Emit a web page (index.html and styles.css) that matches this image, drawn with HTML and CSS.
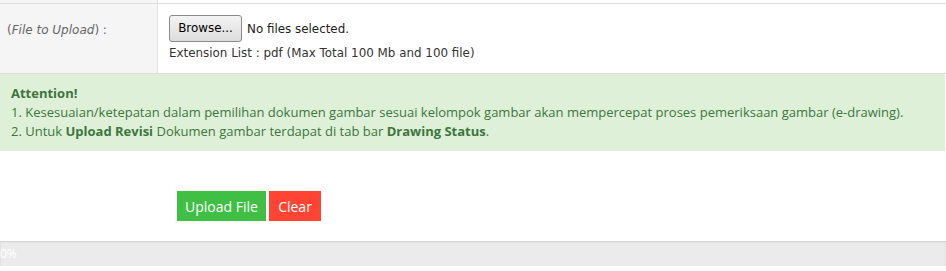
FILE: index.html
```html
<!DOCTYPE html>
<html lang="id">
<head>
    <meta charset="utf-8">
    <title>Upload Dokumen Gambar</title>
    <link rel="stylesheet" href="styles.css">
</head>
<body>
    <table class="form-table">
        <tr class="row-prev">
            <td class="label-cell"></td>
            <td class="value-cell"></td>
        </tr>
        <tr class="row-file">
            <td class="label-cell">(<i>File to Upload</i>) :</td>
            <td class="value-cell">
                <div class="file-line">
                    <span class="browse-btn">Browse...</span>
                    <span class="file-status">No files selected.</span>
                </div>
                <div class="ext-note">Extension List : pdf (Max Total 100 Mb and 100 file)</div>
            </td>
        </tr>
    </table>

    <div class="alert">
        <b>Attention!</b><br>
        1. Kesesuaian/ketepatan dalam pemilihan dokumen gambar sesuai kelompok gambar akan mempercepat proses pemeriksaan gambar (e-drawing).<br>
        2. Untuk <b>Upload Revisi</b> Dokumen gambar terdapat di tab bar <b>Drawing Status</b>.
    </div>

    <div class="actions">
        <button type="button" class="btn btn-upload">Upload File</button>
        <button type="button" class="btn btn-clear">Clear</button>
    </div>

    <div class="progress">
        <div class="progress-bar">0%</div>
    </div>
</body>
</html>
```

FILE: styles.css
```css
body {
    margin: 0;
    background: #fff;
    font-family: "DejaVu Sans", Verdana, sans-serif;
}

.form-table {
    width: 946px;
    border-collapse: collapse;
}
.form-table td {
    border-bottom: 1px solid #ddd;
    padding: 0;
    vertical-align: top;
}
.label-cell {
    width: 150px;
    background: #f5f5f5;
    border-right: 1px solid #e2e2e2;
}
.value-cell {
    background: #fff;
}

.row-prev td {
    height: 3px;
}

.row-file .label-cell {
    color: #666;
    font-size: 12px;
    line-height: 52px;
    padding-left: 7px;
}
.row-file .value-cell {
    padding: 11px 0 0 11px;
    height: 58px;
}

.file-line {
    display: flex;
    align-items: center;
    gap: 5px;
    font-size: 11.9px;
    color: #222;
}
.browse-btn {
    display: inline-block;
    width: 71px;
    height: 25px;
    line-height: 25px;
    text-align: center;
    border: 1px solid #8a8a8a;
    border-radius: 3px;
    background: linear-gradient(#f4f4f4, #dcdcdc);
    color: #000;
}
.ext-note {
    margin-top: 3px;
    font-size: 11.9px;
    line-height: 16px;
    color: #333;
}

.alert {
    background: #dff0d8;
    color: #3c763d;
    font: 13px/19px "Open Sans", sans-serif;
    padding: 10px 11px;
    margin-right: 1px;
}

.actions {
    display: flex;
    gap: 3px;
    padding: 40px 0 20px 177px;
}
.btn {
    border: none;
    height: 30px;
    padding: 0;
    color: #fff;
    font: 14px "Open Sans", sans-serif;
    white-space: nowrap;
    text-align: center;
    cursor: pointer;
}
.btn-upload {
    background: #40bf45;
    width: 89px;
}
.btn-clear {
    background: #ff4433;
    width: 52px;
}

.progress {
    height: 25px;
    background: #ebebeb;
    box-shadow: inset 0 1px 2px rgba(0, 0, 0, 0.12);
    overflow: hidden;
}
.progress-bar {
    width: 0;
    font: 12px/25px "Open Sans", sans-serif;
    color: #fff;
    white-space: nowrap;
}
```
